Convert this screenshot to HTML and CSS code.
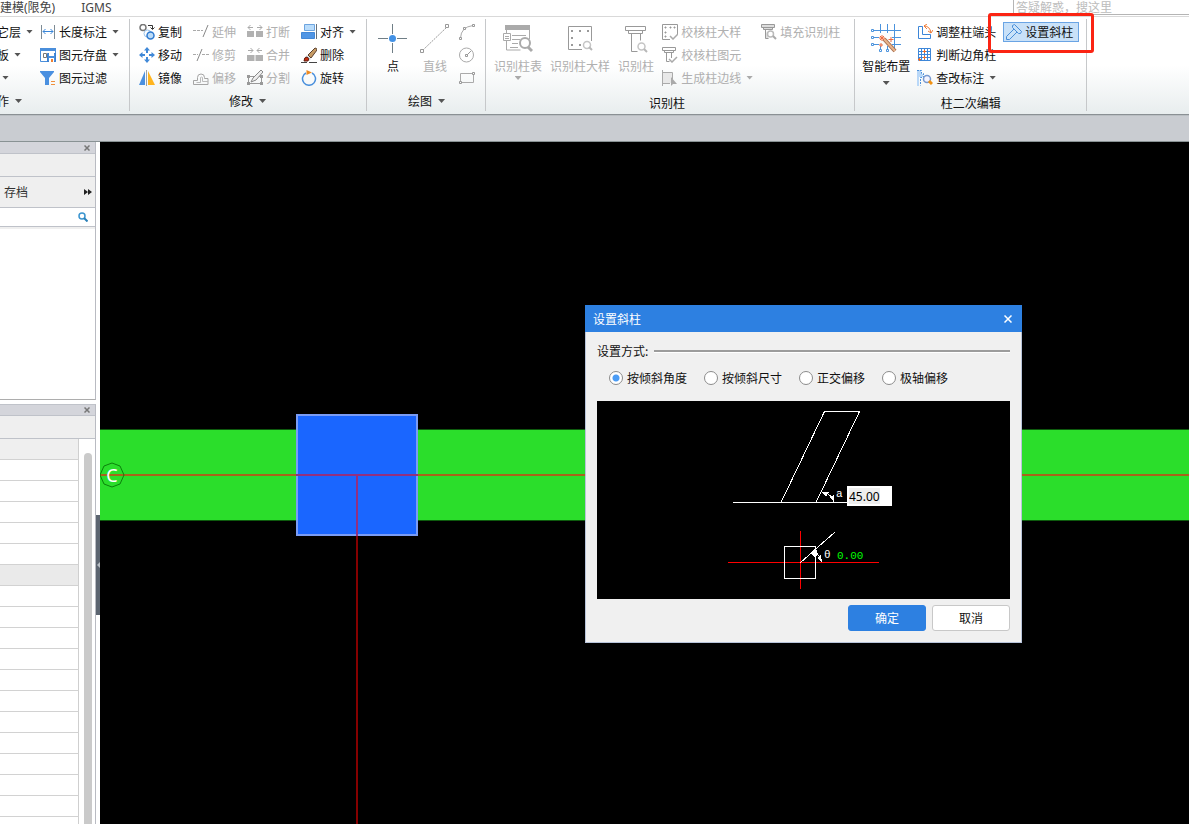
FILE: index.html
```html
<!DOCTYPE html>
<html lang="zh-CN">
<head>
<meta charset="utf-8">
<title>设置斜柱</title>
<link rel="stylesheet" href="styles.css">
</head>
<body>
<div class="app">
  <header class="tabs">
    <nav class="tab-list">
      <button class="tab">建模(限免)</button>
      <button class="tab">IGMS</button>
    </nav>
    <input class="help-search" type="text" placeholder="答疑解惑，搜这里" aria-label="搜索帮助">
  </header>

  <div class="ribbon">
    <section class="group group-clipped">
      <div class="group-body">
        <div class="col col-narrow">
          <button class="tool">它层<i class="caret"></i></button>
          <button class="tool">板<i class="caret"></i></button>
          <button class="tool tool-bare" aria-label="更多"><i class="caret"></i></button>
        </div>
        <div class="col">
          <button class="tool"><svg class="ic" viewBox="0 0 16 16"><path d="M1.5 1v14M14.5 1v14" stroke="#7d8b94"/><path d="M3 7.500h10M5.500 5L3 7.500l2.500 2.500M10.500 5L13 7.500 10.500 10" stroke="#3a86d8"/></svg>长度标注<i class="caret"></i></button>
          <button class="tool"><svg class="ic" viewBox="0 0 16 16"><path d="M.5 1.500h15v13H.5z" stroke="#4a8edb" fill="#fff"/><path d="M0 1h16v3H0z" fill="#4a8edb"/><path d="M3.500 6.500h3v4h-3z" stroke="#777"/><path d="M7.500 6.500h8v8h-8z" fill="#4a8edb" stroke="#3b7fcf"/><path d="M9 6h5v3H9z" fill="#fff"/><path d="M9 11h5v4H9z" fill="#fff"/><path d="M11 12h2v3h-2z" fill="#f08030"/></svg>图元存盘<i class="caret"></i></button>
          <button class="tool"><svg class="ic" viewBox="0 0 16 16"><path d="M0 1h14v1L9 8v7H5V8L0 2z" fill="#4a90e0"/><path d="M11 11.500h4M11 14.500h4" stroke="#f0903c"/></svg>图元过滤</button>
        </div>
      </div>
      <button class="group-title title-left">作<i class="caret"></i></button>
    </section>

    <section class="group pad-edit">
      <div class="group-body gap-wide">
        <div class="col">
          <button class="tool"><svg class="ic" viewBox="0 0 16 16"><circle cx="4" cy="3.500" r="3" fill="#fff" stroke="#777" stroke-width="1.500"/><circle cx="8.500" cy="9.500" r="3.500" fill="#fff" stroke="#9cc4ec"/><circle cx="11.500" cy="11.500" r="3.500" fill="#bcdcf8" stroke="#2f7ad0" stroke-width="1.500"/><path d="M9 1.500h4.500V5M11.500 3.500l2 2 2-2" stroke="#333"/></svg>复制</button>
          <button class="tool"><svg class="ic" viewBox="0 0 16 16"><path d="M8 0l3 3.500H9V6H7V3.500H5zM8 16l3-3.500H9V10H7v2.500H5zM0 8l3.500-3v2H6v2H3.500v2zM16 8l-3.500-3v2H10v2h2.500v2z" fill="#4089d8"/></svg>移动</button>
          <button class="tool"><svg class="ic" viewBox="0 0 16 16"><path d="M6 1v14H0z" fill="#4a90e0"/><path d="M7.500 0v16" stroke="#98a2a8"/><path d="M9 1v14h7z" fill="#ffb41e"/></svg>镜像</button>
        </div>
        <div class="col">
          <button class="tool" disabled><svg class="ic" viewBox="0 0 16 16"><path d="M0 6.500h10" stroke="#aaa" stroke-dasharray="3 1"/><path d="M10 13l5-12" stroke="#888"/></svg>延伸</button>
          <button class="tool" disabled><svg class="ic" viewBox="0 0 16 16"><path d="M0 7.500h5M9 7.500h7" stroke="#aaa" stroke-dasharray="3 1"/><path d="M4 14L9 2" stroke="#888"/></svg>修剪</button>
          <button class="tool" disabled><svg class="ic" viewBox="0 0 16 16"><path d="M.5 14.500v-4h4v-3a3.500 3.500 0 1 1 7 0v1h3.500v6z" stroke="#a5a5a5"/><path d="M3.500 12.500h4v-5a1.500 1.500 0 0 1 2 0v4H15" stroke="#bbb"/></svg>偏移</button>
        </div>
        <div class="col">
          <button class="tool" disabled><svg class="ic" viewBox="0 0 16 16"><path d="M0 7h7v6H0zM9 7h7v6H9z" fill="#b1b1b1"/><path d="M1 3.500h5M3.500 1L1 3.500 3.500 6M10 3.500h5M12.500 1L15 3.500 12.500 6" stroke="#aaa"/></svg>打断</button>
          <button class="tool" disabled><svg class="ic" viewBox="0 0 16 16"><path d="M0 8h7.500v6H0zM8.500 8H16v6H8.500z" fill="#b1b1b1"/><path d="M1 3.500h5M3.500 1L6 3.500 3.500 6M10 3.500h5M12.500 1L10 3.500 12.500 6" stroke="#aaa"/></svg>合并</button>
          <button class="tool" disabled><svg class="ic" viewBox="0 0 16 16"><path d="M1.500 6.500h13v7h-13z" stroke="#999"/><path d="M0 5h3v3H0zM0 12h3v3H0zM13 12h3v3h-3zM13 5h3v3h-3z" fill="#999"/><path d="M4 12l2-4 8-8 2 2-7 8z" fill="#eee" stroke="#888"/></svg>分割</button>
        </div>
        <div class="col">
          <button class="tool"><svg class="ic" viewBox="0 0 16 16"><path d="M3.500.5h10v6h-10z" fill="#b9dcfb" stroke="#6da4df"/><path d="M.5 8.500h13v6H.5z" fill="#4f95e5" stroke="#4387d6"/><path d="M15.500 0v15" stroke="#68727b"/></svg>对齐<i class="caret"></i></button>
          <button class="tool"><svg class="ic" viewBox="0 0 16 16"><path d="M0 15.500h6M8 15.500h8" stroke="#444"/><path d="M7 8l7-7q2 0 2 2l-6 8z" fill="#c59a63" stroke="#5b4130"/><path d="M5 9l4 4" stroke="#d8dde0" stroke-width="3"/><path d="M3 14q0-4 3-4 3 1 1 4z" fill="#c62f10" stroke="#5d1e12"/></svg>删除</button>
          <button class="tool"><svg class="ic" viewBox="0 0 16 16"><path d="M11 3A6.500 6.500 0 1 1 5 3" stroke="#4a90dc" stroke-width="1.500"/><path d="M5.500 0L11 2.500 5.500 5z" fill="#ee8b22"/></svg>旋转</button>
        </div>
      </div>
      <button class="group-title">修改<i class="caret"></i></button>
    </section>

    <section class="group pad-draw">
      <div class="group-body">
        <div class="big-set">
          <button class="big"><svg class="ic-lg" viewBox="0 0 30 30"><path d="M0 15.500h10M19 15.500h10M14.500 1v10M14.500 20v10" stroke="#6f7e86"/><circle cx="14.500" cy="15.500" r="3.500" fill="#4291e5"/></svg>点</button>
          <button class="big" disabled><svg class="ic-lg" viewBox="0 0 30 30"><path d="M3 27L27 4" stroke="#999" stroke-dasharray="2 1"/><path d="M.5 26.500h3v3h-3zM25.500 1.500h3v3h-3z" fill="#fff" stroke="#999"/></svg>直线</button>
        </div>
        <div class="col">
          <button class="tool" disabled aria-label="弧线"><svg class="ic" viewBox="0 0 16 16"><path d="M1.500 14Q2 3 14 1.500" stroke="#aaa"/><path d="M.5 13.500h2v2h-2zM4.500 3.500h2v2h-2zM13.500.5h2v2h-2z" fill="#fff" stroke="#999"/></svg></button>
          <button class="tool" disabled aria-label="圆"><svg class="ic" viewBox="0 0 16 16"><circle cx="7.500" cy="8" r="7" stroke="#aaa"/><path d="M8 8l4-4" stroke="#999"/><path d="M6.500 7.500h2v2h-2z" fill="#fff" stroke="#999"/></svg></button>
          <button class="tool" disabled aria-label="矩形"><svg class="ic" viewBox="0 0 16 16"><path d="M1.500 3.500h13v9h-13z" stroke="#aaa"/><path d="M.5 11.500h2v2h-2zM13.500 2.500h2v2h-2z" fill="#fff" stroke="#999"/></svg></button>
        </div>
      </div>
      <button class="group-title">绘图<i class="caret"></i></button>
    </section>

    <section class="group pad-recognize">
      <div class="group-body gap-mid">
        <button class="big" disabled><svg class="ic-lg" viewBox="0 0 30 30"><path d="M2 2h25v5H2z" fill="#aaa"/><path d="M3.500 7v3M3.500 18v9h14M26.500 7v9M9 12.500h14M9 16.500h8M9 20.500h6M7 24.500h8" stroke="#aaa"/><path d="M.5 10.500h7v7h-7z" fill="#fff" stroke="#aaa"/><path d="M2 13.500h4M2 15.500h4" stroke="#aaa"/><circle cx="22" cy="20" r="5" fill="#fff" stroke="#aaa" stroke-width="2"/><path d="M25 24l4 4" stroke="#aaa" stroke-width="3"/></svg>识别柱表<i class="caret"></i></button>
        <button class="big" disabled><svg class="ic-lg" viewBox="0 0 30 30"><path d="M17 26.500H3.500v-23h23V18" stroke="#999"/><path d="M6 7h2v2H6zM14 7h2v2h-2zM22 7h2v2h-2zM6 14h2v2H6zM6 21h2v2H6zM14 21h2v2h-2z" fill="#999"/><circle cx="22" cy="22" r="3.500" fill="#fff" stroke="#c5c5c5" stroke-width="1.500"/><path d="M24 24l3 3" stroke="#b8b8b8" stroke-width="2"/></svg>识别柱大样</button>
        <button class="big" disabled><svg class="ic-lg" viewBox="0 0 30 30"><path d="M4.500 3.500h20v4h-20zM7.500 7.500v3h14v-3M10.500 10.500v18h6M19.500 10.500v7" stroke="#999"/><circle cx="20.500" cy="23.500" r="3.500" fill="#fff" stroke="#c5c5c5" stroke-width="1.500"/><path d="M23 26l3 3" stroke="#b8b8b8" stroke-width="2"/></svg>识别柱</button>
        <div class="col">
          <button class="tool" disabled><svg class="ic" viewBox="0 0 16 16"><path d="M8 15.500H.5V.5h15V10" stroke="#999"/><path d="M3 3h1v1H3zM8 3h1v1H8zM12 3h1v1h-1zM3 8h1v1H3zM3 12h1v1H3z" fill="#888" stroke="#999"/><path d="M8 12l3 3 5-5" stroke="#aaa" stroke-width="1.500"/></svg>校核柱大样</button>
          <button class="tool" disabled><svg class="ic" viewBox="0 0 16 16"><path d="M.5.5h13v3H.5zM2.500 3.500v2h9v-2M4.500 5.500v9h3M9.500 5.500V11" stroke="#999"/><path d="M7 12l3 3 5-5" stroke="#aaa" stroke-width="1.500"/></svg>校核柱图元</button>
          <button class="tool" disabled><svg class="ic" viewBox="0 0 16 16"><path d="M1 3h9v10H1z" fill="#e8e8e8"/><path d="M.5 0v16M0 2.500h10.500V9M0 13.500h8" stroke="#aaa"/><path d="M9 7l6 7h-4l-2 2z" fill="#aaa"/></svg>生成柱边线<i class="caret"></i></button>
        </div>
        <div class="col">
          <button class="tool" disabled><svg class="ic" viewBox="0 0 16 16"><path d="M.5.500h13v3H.5zM2.500 3.500v2h9v-2M4.500 5.500v9h3" stroke="#999" fill="#ddd"/><circle cx="9.500" cy="10" r="3" fill="#fff" stroke="#bbb" stroke-width="1.500"/><path d="M12 12l3 3" stroke="#aaa" stroke-width="2"/></svg>填充识别柱</button>
        </div>
      </div>
      <div class="group-title title-low">识别柱</div>
    </section>

    <section class="group pad-column">
      <div class="group-body gap-column">
        <button class="big big-low"><svg class="ic-lg" viewBox="0 0 30 30"><path d="M9.500 1v26M16.500 1v26M23.500 1v26M1 7.500h29M1 14.500h29M1 21.500h29" stroke="#4b93dd"/><path d="M8 10h13v13H8z" fill="#fbfcfc"/><path d="M.5 6.500h2v2h-2zM.5 13.500h2v2h-2zM.5 20.500h2v2h-2zM8.500 26.500h2v2h-2zM15.500 26.500h2v2h-2z" fill="#fff" stroke="#4b93dd"/><path d="M13 16l11 12" stroke="#a66f50" stroke-width="4"/><path d="M13 16l11 12" stroke="#e8b48c" stroke-width="2"/><path d="M11 12v6M8 15h6M9 13l4 4M13 13l-4 4M20 14v5M17.500 16.500h5M10 20v4M8 22h4" stroke="#ee6b3e"/></svg>智能布置<i class="caret"></i></button>
        <div class="col">
          <button class="tool"><svg class="ic" viewBox="0 0 16 16"><path d="M1.500 2.500h4v8h8v4h-12z" stroke="#3d86d8"/><path d="M7 2q6 0 7 7M7 2l3-2M7 2l3 3M14 9l-3-2M14 9l2-3" stroke="#ef7a34"/></svg>调整柱端头</button>
          <button class="tool"><svg class="ic" viewBox="0 0 16 16"><path d="M1.500 1.500h12v12h-12zM4.500 1v13M7.500 1v13M10.500 1v13M1 4.500h13M1 7.500h13M1 10.500h13" stroke="#3d86d8"/><path d="M7.500 3v3M6 4.500h3M7.500 9v3M6 10.500h3M2.500 11v3M1 12.500h3" stroke="#ef6a24"/></svg>判断边角柱</button>
          <button class="tool"><svg class="ic" viewBox="0 0 16 16"><path d="M0 0h4v4h2v3H2v9H0z" fill="#b9d8f8"/><path d="M0 .5h4.500v3h2v4h-3v8" stroke="#4c91dc" stroke-dasharray="2 1"/><circle cx="10" cy="9" r="3.500" fill="#f4f4ff" stroke="#789ad0" stroke-width="1.500"/><path d="M12 11l3 3" stroke="#f29110" stroke-width="3"/></svg>查改标注<i class="caret"></i></button>
        </div>
        <div class="col">
          <div class="callout">
            <button class="tool tool-active"><svg class="ic" viewBox="0 0 16 16"><path d="M6.500 1.500l2-1 7 7-1 2-2 0-6-6zM8 5L.5 12.500v3h3L11 8" fill="#c9e2f9" stroke="#4a8ed8"/></svg>设置斜柱</button>
          </div>
        </div>
      </div>
      <div class="group-title title-low">柱二次编辑</div>
    </section>
  </div>

  <div class="strip"></div>

  <main class="workspace">
    <aside class="sidebar">
      <section class="panel panel-list">
        <div class="panel-bar"><button class="panel-close" aria-label="关闭"><svg viewBox="0 0 6 6"><path d="M.5.5l5 5M5.500.5l-5 5" stroke="#777" stroke-width="1.500"/></svg></button></div>
        <div class="panel-blank"></div>
        <div class="panel-tools"><button class="link">存档</button><button class="more" aria-label="展开"><svg viewBox="0 0 8 6"><path d="M0 0l4 3-4 3zM4 0l4 3-4 3z" fill="#222"/></svg></button></div>
        <div class="panel-search"><input type="text" aria-label="搜索构件"><svg viewBox="0 0 10 10"><circle cx="4" cy="4" r="3" stroke="#3b95d0" stroke-width="1.500"/><path d="M6 6l3.500 3.500" stroke="#2a80b8" stroke-width="2"/></svg></div>
        <div class="panel-content"></div>
      </section>
      <section class="panel panel-props">
        <div class="panel-bar"><button class="panel-close" aria-label="关闭"><svg viewBox="0 0 6 6"><path d="M.5.5l5 5M5.500.5l-5 5" stroke="#777" stroke-width="1.500"/></svg></button></div>
        <div class="panel-blank"></div>
        <div class="props">
          <table class="props-table">
            <thead><tr><th></th></tr></thead>
            <tbody>
              <tr><td></td></tr><tr><td></td></tr><tr><td></td></tr><tr><td></td></tr><tr><td></td></tr>
              <tr class="section-row"><td></td></tr>
              <tr><td></td></tr><tr><td></td></tr><tr><td></td></tr><tr><td></td></tr><tr><td></td></tr><tr><td></td></tr>
              <tr><td></td></tr><tr><td></td></tr><tr><td></td></tr><tr><td></td></tr><tr><td></td></tr><tr><td></td></tr>
            </tbody>
          </table>
          <div class="scroll"><div class="thumb"></div></div>
        </div>
      </section>
    </aside>
    <div class="splitter"><button class="fold" aria-label="收起"><svg viewBox="0 0 3 6"><path d="M3 0v6L0 3z" fill="#b8bec4"/></svg></button></div>

    <div class="canvas">
      <svg class="drawing" shape-rendering="crispEdges">
        <rect x="0" y="287" width="100%" height="92" fill="#0d5a0d"/>
        <rect x="0" y="288" width="100%" height="90" fill="#2bde2b"/>
        <rect x="0" y="332" width="100%" height="2" fill="#a8641a"/>
        <rect x="196" y="272" width="122" height="122" fill="#7a9cf5"/>
        <rect x="198" y="274" width="118" height="118" fill="#1a66ff"/>
        <rect x="196" y="332" width="122" height="2" fill="#923080"/>
        <rect x="256" y="334" width="2" height="60" fill="#923080"/>
        <rect x="256" y="394" width="2" height="100%" fill="#850000"/>
        <path d="M12 321l8 3 4 9-4 9-8 3-8-3-4-9 4-9z" fill="none" stroke="#0b820b" shape-rendering="auto"/>
        <text class="axis" x="12" y="340" text-anchor="middle">C</text>
      </svg>

      <div class="dialog" role="dialog" aria-labelledby="dlg-title">
        <div class="dialog-bar">
          <span id="dlg-title">设置斜柱</span>
          <button class="dialog-close" aria-label="关闭"><svg viewBox="0 0 8 8"><path d="M.5.5l7 7M7.500.5l-7 7" stroke="#fff" stroke-width="1.500"/></svg></button>
        </div>
        <div class="dialog-body">
          <div class="caption"><span id="mode">设置方式:</span></div>
          <div class="radios" role="radiogroup" aria-labelledby="mode">
            <label><input type="radio" name="mode" checked>按倾斜角度</label>
            <label><input type="radio" name="mode">按倾斜尺寸</label>
            <label><input type="radio" name="mode">正交偏移</label>
            <label><input type="radio" name="mode">极轴偏移</label>
          </div>
          <div class="preview">
            <svg viewBox="0 0 413 198" class="diagram" shape-rendering="crispEdges">
              <path d="M184 101.500L227.500 10.500H262.500L219 101.500M136 101.500h114" stroke="#fff"/>
              <path d="M227 92q8 1 10 9" stroke="#fff"/>
              <path d="M225 91l7 0-3 5zM237 101l-5-5 5-2z" fill="#fff"/>
              <path d="M131 161.500h151M203.500 130v58" stroke="#f00"/>
              <path d="M187.500 145.500h31v32h-31z" stroke="#fff"/>
              <path d="M203 162l35-31M216 151q7 3 8 8" stroke="#fff"/>
              <path d="M214 152l6-3 1 5-4 2zM225 161l-5-4 4-3z" fill="#fff"/>
              <text x="239" y="96" class="mark">a</text>
              <text x="227" y="157" class="mark">θ</text>
              <text x="240" y="158" class="mark mark-value">0.00</text>
            </svg>
            <input class="angle" type="text" value="45.00" aria-label="倾斜角度">
          </div>
          <div class="actions">
            <button class="btn btn-primary">确定</button>
            <button class="btn">取消</button>
          </div>
        </div>
      </div>
    </div>
  </main>
</div>
</body>
</html>
```

FILE: styles.css
```css
* { box-sizing: border-box; }
body {
  margin: 0;
  overflow: hidden;
  background: #fff;
  color: #111;
  font: 12px/16px "Noto Sans CJK SC", sans-serif;
}
button {
  margin: 0;
  padding: 0;
  border: 0;
  background: none;
  color: inherit;
  font: inherit;
  white-space: nowrap;
}
input { font: inherit; }
svg { display: block; flex: none; fill: none; }
.app { display: flex; flex-direction: column; height: 100vh; }

/* tab row */
.tabs {
  display: flex;
  justify-content: space-between;
  height: 17px;
  border-bottom: 1px solid #d9d9d9;
}
.tab-list { display: flex; gap: 26px; height: 16px; }
.tab { color: #444; font-family: "Noto Sans", "Noto Sans CJK SC", sans-serif; }
.help-search {
  width: 176px;
  height: 15px;
  padding: 0 2px;
  border: 0;
  border-left: 1px solid #b5b5b5;
  border-bottom: 1px solid #b5b5b5;
  background: none;
}
.help-search::placeholder { color: #bcbcbc; }

/* ribbon */
.ribbon {
  display: flex;
  height: 98px;
  padding-top: 2px;
  border-bottom: 1px solid #8a9094;
  background: linear-gradient(#fff 50%, #e8edee);
}
.group {
  display: flex;
  flex-direction: column;
  height: 92px;
  padding-top: 1px;
  border-right: 1px solid #c6c8ca;
}
.group-body { display: flex; height: 69px; }
.group-clipped { margin-left: -3px; padding-right: 10px; }
.pad-edit { padding-left: 9px; padding-right: 10px; }
.pad-draw { padding-left: 11px; padding-right: 10px; }
.pad-draw .group-body { gap: 9px; }
.pad-recognize { padding-left: 8px; padding-right: 14px; }
.pad-column { padding-left: 7px; padding-right: 7px; }
.gap-wide { gap: 11px; }
.gap-mid { gap: 8px; }
.gap-column { gap: 7px; }
.col { display: grid; grid-template-rows: repeat(3, 23px); align-items: center; justify-items: start; }
.col-narrow { width: 43px; }
.tool { display: flex; align-items: center; gap: 3px; }
.tool-bare { padding-left: 3px; }
.tool:disabled, .big:disabled { color: #b0b0b0; }
.ic { width: 16px; height: 16px; }
.ic-lg { width: 30px; height: 30px; margin-bottom: 5px; }
.caret {
  width: 7px;
  height: 4px;
  margin-left: 2px;
  background: #555;
  clip-path: polygon(0 0, 100% 0, 50% 100%);
}
:disabled .caret { background: #aaa; }
.big-set { display: flex; gap: 12px; }
.big {
  display: flex;
  flex-direction: column;
  align-items: center;
  padding-top: 3px;
}
.big .caret { margin: 2px 0 0; }
.big-low .caret { margin-top: 7px; }
.group-title {
  display: flex;
  align-items: center;
  justify-content: center;
  gap: 4px;
  height: 16px;
  margin-top: 4px;
}
.title-left { justify-content: flex-start; }
.title-low { margin-top: 6px; }
.callout { position: relative; }
.callout::after {
  content: "";
  position: absolute;
  inset: -9px -15px -11px;
  border: 3px solid #fb2413;
  border-radius: 3px;
  pointer-events: none;
}
.tool-active {
  height: 20px;
  padding: 0 5px 0 2px;
  border: 1px solid #6aa4e4;
  background: #c9e1f8;
}

.strip { height: 27px; background: #c9ccd1; border-bottom: 1px solid #899294; border-top: 1px solid #b9bec2; }

/* side panels */
.workspace { display: flex; flex: 1; min-height: 0; }
.sidebar { display: flex; flex-direction: column; gap: 4px; width: 96px; }
.panel { display: flex; flex-direction: column; border-right: 1px solid #b9bbc2; }
.panel-list { height: 258px; border-bottom: 1px solid #adadad; }
.panel-props { flex: 1; min-height: 0; border-top: 1px solid #c0c3ca; }
.panel-bar {
  display: flex;
  align-items: center;
  justify-content: flex-end;
  height: 12px;
  padding-right: 5px;
  border-bottom: 1px solid #bfc2c9;
  background: #d4d5db;
}
.panel-props .panel-bar { height: 11px; }
.panel-close svg { width: 6px; height: 6px; }
.panel-blank { height: 23px; border-bottom: 1px solid #bfc2c9; background: #efefef; }
.panel-tools {
  display: flex;
  align-items: center;
  justify-content: space-between;
  height: 31px;
  padding: 0 3px 0 4px;
  border-bottom: 1px solid #bfc2c9;
  background: #efefef;
}
.link { color: #333; }
.more svg { width: 8px; height: 6px; }
.panel-search {
  display: flex;
  align-items: center;
  height: 19px;
  padding-right: 7px;
  border-bottom: 1px solid #bfc2c9;
}
.panel-search input { flex: 1; min-width: 0; height: 16px; border: 0; background: none; }
.panel-search svg { width: 10px; height: 10px; }
.panel-content { flex: 1; border-top: 2px solid #efefef; }
.props { display: flex; flex: 1; min-height: 0; overflow: hidden; }
.props-table { width: 79px; align-self: flex-start; border-collapse: separate; border-spacing: 0; }
.props-table th, .props-table td {
  height: 21px;
  padding: 0;
  border-right: 1px solid #cfcfcf;
  border-bottom: 1px solid #d2d2d2;
}
.props-table th { background: #efefef; }
.section-row td { background: #eaeaea; }
.scroll { display: flex; flex: 1; padding: 14px 3px 0 5px; }
.thumb { flex: 1; border-radius: 4px 4px 0 0; background: #cacaca; }
.splitter { display: flex; flex-direction: column; width: 4px; padding-top: 373px; }
.fold { display: flex; align-items: center; justify-content: flex-end; height: 100px; background: #5c6570; }
.fold svg { width: 3px; height: 6px; }

/* drawing area */
.canvas { position: relative; flex: 1; overflow: hidden; background: #000; }
.drawing { width: 100%; height: 100%; }
.axis { fill: #fff; font: 18px "Noto Sans", sans-serif; }

/* dialog */
.dialog {
  position: absolute;
  left: 485px;
  top: 163px;
  width: 437px;
  background: #f0f0f0;
}
.dialog-bar {
  display: flex;
  align-items: center;
  justify-content: space-between;
  height: 27px;
  padding: 0 10px 0 8px;
  background: #2d80e1;
  color: #fff;
}
.dialog-close svg { width: 8px; height: 8px; }
.dialog-body { padding: 11px 11px 11px; border: 1px solid #b8c4da; border-top: 0; }
.caption { display: flex; align-items: center; gap: 6px; height: 16px; }
.caption::after { content: ""; flex: 1; height: 2px; background: #9c9c9c; border-bottom: 1px solid #fff; }
.radios { display: flex; gap: 17px; margin: 11px 0 15px 12px; }
.radios label { display: flex; align-items: center; gap: 4px; white-space: nowrap; }
.radios input {
  appearance: none;
  width: 14px;
  height: 14px;
  margin: 0;
  border: 1px solid #8c8c8c;
  border-radius: 50%;
  background: #fff;
}
.radios input:checked { background: radial-gradient(#4b9cf5 3px, #fff 4px); }
.preview { position: relative; background: #000; }
.diagram { width: 100%; height: auto; }
.mark { fill: #fff; font: 11px "Liberation Mono", monospace; }
.mark-value { fill: #0f0; }
.angle {
  position: absolute;
  left: 250px;
  top: 85px;
  width: 45px;
  height: 20px;
  padding: 0 2px;
  border: 0;
  background: linear-gradient(#eee, #eee) 2px 2px / 31px 16px no-repeat #fff;
  font-family: "Noto Sans", sans-serif;
}
.actions { display: flex; justify-content: flex-end; gap: 6px; margin-top: 6px; }
.btn { width: 78px; height: 26px; border: 1px solid #c8c8c8; border-radius: 3px; background: #fff; }
.btn-primary { border-color: #2d80e1; background: #2d80e1; color: #fff; }
```
